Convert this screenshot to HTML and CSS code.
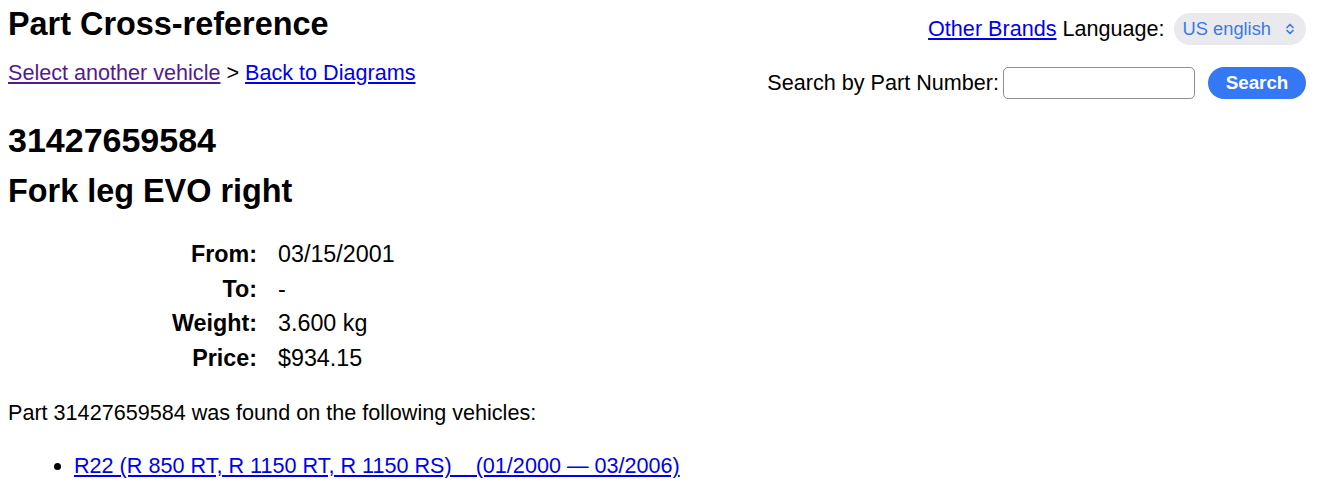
FILE: index.html
```html
<!DOCTYPE html>
<html lang="en">
<head>
<meta charset="utf-8">
<title>Part Cross-reference</title>
<link rel="stylesheet" href="styles.css">
</head>
<body>
<div class="top">
  <div class="top-left">
    <h1 class="title">Part Cross-reference</h1>
    <div class="crumbs"><a class="visited" href="#">Select another vehicle</a> &gt; <a href="#">Back to Diagrams</a></div>
  </div>
  <div class="top-right">
    <div class="lang-row">
      <a href="#">Other Brands</a> <span class="lang-label">Language:</span>
      <span class="select">US english
        <svg class="chev" width="10" height="12" viewBox="0 0 10 12"><path d="M2 4.5 L5 1.5 L8 4.5 M2 7.5 L5 10.5 L8 7.5" fill="none" stroke="currentColor" stroke-width="1.7" stroke-linecap="round" stroke-linejoin="round"/></svg>
      </span>
    </div>
    <form class="search-row">
      <label class="search-label">Search by Part Number:</label><input class="search-input" type="text"><button class="search-btn" type="button">Search</button>
    </form>
  </div>
</div>

<h2 class="partno">31427659584</h2>
<h2 class="partname">Fork leg EVO right</h2>

<div class="details">
  <div class="row"><span class="k">From:</span><span class="v">03/15/2001</span></div>
  <div class="row"><span class="k">To:</span><span class="v">-</span></div>
  <div class="row"><span class="k">Weight:</span><span class="v">3.600 kg</span></div>
  <div class="row"><span class="k">Price:</span><span class="v">$934.15</span></div>
</div>

<p class="found">Part 31427659584 was found on the following vehicles:</p>
<ul class="vehicles">
  <li><a href="#">R22 (R 850 RT, R 1150 RT, R 1150 RS) &nbsp;&nbsp;&nbsp;(01/2000 &mdash; 03/2006)</a></li>
</ul>
</body>
</html>
```
FILE: styles.css
```css
html, body {
  margin: 0;
  padding: 0;
  background: #fff;
}
body {
  padding: 0 19px 0 8px;
  font-family: "Liberation Sans", Arial, Helvetica, sans-serif;
  font-size: 21.6px;
  color: #000;
}
a {
  color: #0000ee;
  text-decoration: underline;
}
a.visited {
  color: #551a8b;
}
.top {
  display: flex;
  justify-content: space-between;
  align-items: flex-start;
}
.title {
  margin: 0;
  padding-top: 4px;
  font-size: 32.4px;
  font-weight: bold;
  line-height: 40px;
}
.crumbs {
  margin-top: 16px;
  line-height: 25px;
}
.top-right {
  display: flex;
  flex-direction: column;
  align-items: flex-end;
  padding-top: 13px;
}
.lang-row {
  display: flex;
  align-items: center;
  gap: 6px;
  height: 32px;
}
.select {
  display: inline-flex;
  align-items: center;
  gap: 14px;
  height: 32px;
  padding: 0 11px 0 9px;
  border-radius: 16px;
  background: #e9e9ee;
  color: #3a7be0;
  font-family: "Liberation Sans", Arial, sans-serif;
  font-size: 18.3px;
  margin-left: 3px;
}
.chev {
  color: #3a7be0;
}
.search-row {
  display: flex;
  align-items: center;
  margin: 21px 0 0;
}
.search-label {
  margin-right: 4px;
}
.search-input {
  width: 190px;
  height: 30px;
  box-sizing: content-box;
  padding: 0;
  border: 1.5px solid #8f8f8f;
  border-radius: 5px;
  background: #fff;
  margin: 1px 0 0;
}
.search-btn {
  margin-left: 13px;
  height: 32px;
  width: 98px;
  border: 0;
  border-radius: 16px;
  background: #3478f6;
  color: #fff;
  font-family: "Liberation Sans", Arial, sans-serif;
  font-weight: bold;
  font-size: 18.8px;
  padding: 0;
}
.partno, .partname {
  margin: 0;
  font-size: 32.4px;
  font-weight: bold;
  line-height: 40px;
}
.partno {
  margin-top: 21px;
  font-size: 34px;
}
.partname {
  margin-top: 11px;
}
.details {
  margin-top: 31px;
  display: grid;
  grid-template-columns: 257px auto;
  column-gap: 21px;
  row-gap: 9.7px;
  justify-content: start;
  margin-left: -8px;
  font-size: 23.3px;
}
.row {
  display: contents;
}
.k {
  font-weight: bold;
  text-align: right;
  line-height: 25px;
}
.v {
  line-height: 25px;
}
.found {
  margin: 29px 0 0;
  line-height: 25px;
}
.vehicles {
  margin: 28px 0 0;
  padding-left: 66px;
  line-height: 25px;
}
```
